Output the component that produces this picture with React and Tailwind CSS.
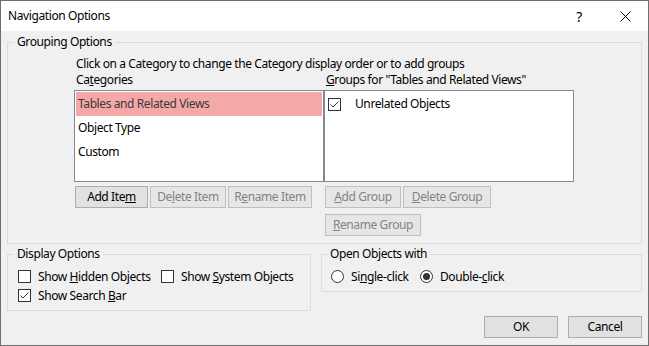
import React from "react";

const font = { fontFamily: '"Noto Sans", "Open Sans", sans-serif' };

function Btn({ children, w, disabled, h = "h-[22px]" }) {
  return (
    <div
      className={`${w} ${h} flex items-center justify-center border text-[12px] leading-none ${
        disabled
          ? "border-[#bfbfbf] bg-[#e6e6e6] text-[#838383]"
          : "border-[#adadad] bg-[#e1e1e1] text-black"
      }`}
    >
      {children}
    </div>
  );
}

function Check({ checked }) {
  return (
    <div className="w-[13px] h-[13px] border border-[#333333] bg-white flex items-center justify-center shrink-0">
      {checked && (
        <svg width="11" height="11" viewBox="0 0 11 11">
          <polyline points="1.5,5.5 4,8 9.5,2.5" fill="none" stroke="#333333" strokeWidth="1" />
        </svg>
      )}
    </div>
  );
}

function Radio({ checked }) {
  return (
    <div className="w-[13px] h-[13px] rounded-full border border-[#333333] bg-white flex items-center justify-center shrink-0">
      {checked && <div className="w-[7px] h-[7px] rounded-full bg-[#333333]" />}
    </div>
  );
}

function Legend({ children, ml = "ml-[6px]" }) {
  return (
    <legend className={`${ml} px-[3px] text-[12px] leading-[16px] text-black`}>{children}</legend>
  );
}

export default function App() {
  return (
    <div
      className="w-[649px] h-[346px] border border-[#6e6e6e] flex flex-col bg-[#f0f0f0] overflow-hidden tracking-[-0.4px]"
      style={font}
    >
      {/* Title bar */}
      <div className="h-[30px] bg-white flex items-center shrink-0">
        <div className="pl-[7px] text-[12px] text-black">Navigation Options</div>
        <div className="ml-auto flex h-full">
          <div className="w-[46px] h-full flex items-center justify-center text-[14px] text-black">?</div>
          <div className="w-[46px] h-full flex items-center justify-center">
            <svg width="11" height="11" viewBox="0 0 11 11">
              <path d="M0.5 0.5 L10.5 10.5 M10.5 0.5 L0.5 10.5" stroke="#000" strokeWidth="1" />
            </svg>
          </div>
        </div>
      </div>

      {/* Body */}
      <div className="flex-1 pl-[6px] pt-[3px] text-[12px] text-black">
        <fieldset className="w-[635px] border border-[#dcdcdc]">
          <Legend>Grouping Options</Legend>
          <div className="pl-[66px] pt-[6px] pb-[7px]">
            <div className="pl-[2px] leading-[16px]">
              Click on a Category to change the Category display order or to add groups
            </div>
            <div className="flex">
              {/* Categories column */}
              <div className="w-[250px] flex flex-col">
                <div className="pl-[2px] leading-[16px]">
                  Ca<u>t</u>egories
                </div>
                <div className="mt-[2px] h-[92px] border border-[#828790] bg-white p-[1px]">
                  <div className="h-[24px] flex items-center px-[2px] bg-[#f5a8a8] text-[#3a3a3a]">
                    Tables and Related Views
                  </div>
                  <div className="h-[24px] flex items-center px-[2px]">Object Type</div>
                  <div className="h-[24px] flex items-center px-[2px]">Custom</div>
                </div>
                <div className="mt-[4px] pl-[1px] flex gap-[2px]">
                  <Btn w="w-[73px]">
                    Add Ite<u>m</u>
                  </Btn>
                  <Btn w="w-[76px]" disabled>
                    De<u>l</u>ete Item
                  </Btn>
                  <Btn w="w-[84px]" disabled>
                    R<u>e</u>name Item
                  </Btn>
                </div>
              </div>
              {/* Groups column */}
              <div className="w-[250px] flex flex-col">
                <div className="pl-[2px] leading-[16px]">
                  <u>G</u>roups for "Tables and Related Views"
                </div>
                <div className="mt-[2px] h-[92px] border border-[#828790] bg-white p-[1px]">
                  <div className="h-[24px] flex items-center pl-[2px]">
                    <Check checked />
                    <span className="ml-[14px]">Unrelated Objects</span>
                  </div>
                </div>
                <div className="mt-[4px] pl-[1px] flex gap-[2px]">
                  <Btn w="w-[76px]" disabled>
                    <u>A</u>dd Group
                  </Btn>
                  <Btn w="w-[88px]" disabled>
                    <u>D</u>elete Group
                  </Btn>
                </div>
                <div className="mt-[6px] pl-[1px] flex">
                  <Btn w="w-[96px]" disabled>
                    <u>R</u>ename Group
                  </Btn>
                </div>
              </div>
            </div>
          </div>
        </fieldset>

        <div className="mt-[2px] flex">
          <fieldset className="w-[304px] border border-[#dcdcdc] self-start">
            <Legend>Display Options</Legend>
            <div className="pl-[10px] pt-[5px] pb-[5px]">
              <div className="h-[19px] flex items-center">
                <div className="w-[143px] flex items-center">
                  <Check />
                  <span className="ml-[7px]">
                    Show <u>H</u>idden Objects
                  </span>
                </div>
                <div className="flex items-center">
                  <Check />
                  <span className="ml-[7px]">
                    Show <u>S</u>ystem Objects
                  </span>
                </div>
              </div>
              <div className="h-[19px] flex items-center">
                <Check checked />
                <span className="ml-[7px]">
                  Show Search <u>B</u>ar
                </span>
              </div>
            </div>
          </fieldset>

          <div className="ml-[10px] w-[321px] flex flex-col">
            <fieldset className="border border-[#dcdcdc]">
              <Legend ml="ml-[5px]">Open Objects with</Legend>
              <div className="pl-[9px] pt-[5px] pb-[5px]">
                <div className="h-[19px] flex items-center">
                  <div className="w-[89px] flex items-center">
                    <Radio />
                    <span className="ml-[7px]">
                      Si<u>n</u>gle-click
                    </span>
                  </div>
                  <div className="flex items-center">
                    <Radio checked />
                    <span className="ml-[7px]">
                      Double-<u>c</u>lick
                    </span>
                  </div>
                </div>
              </div>
            </fieldset>
            <div className="mt-[24px] flex justify-end gap-[10px]">
              <Btn w="w-[74px]">OK</Btn>
              <Btn w="w-[74px]">Cancel</Btn>
            </div>
          </div>
        </div>
      </div>
    </div>
  );
}
